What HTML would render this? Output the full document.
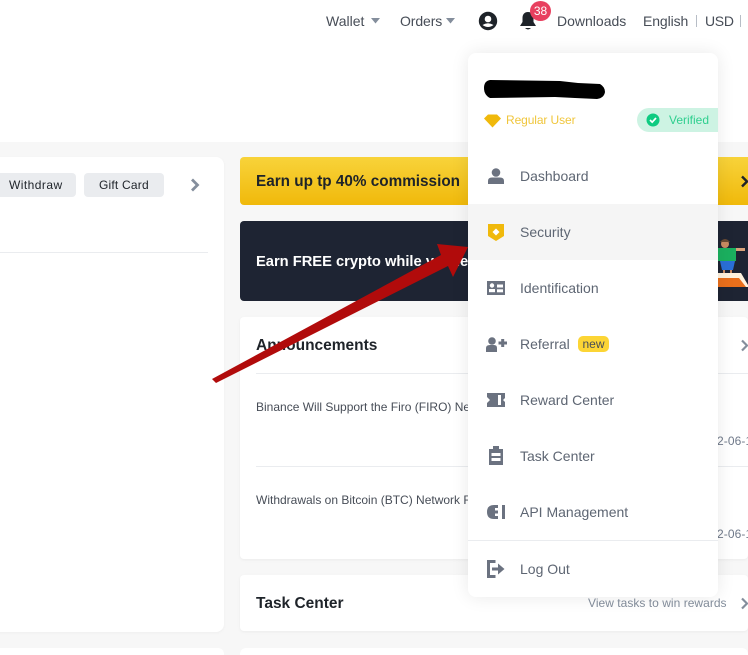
<!DOCTYPE html>
<html><head><meta charset="utf-8">
<style>
html,body{margin:0;padding:0;width:748px;height:655px;overflow:hidden;}
#w{width:748px;height:655px;overflow:hidden;position:relative;background:#f7f7f7;font-family:"Liberation Sans",sans-serif;}
.b{position:absolute;background:#fff;}
.t{position:absolute;white-space:nowrap;line-height:18px;}
svg{position:absolute;overflow:visible;}
.nav{font-size:14px;color:#474d57;top:12px;}
.m{font-size:14px;color:#5e6673;left:520px;}
.h{font-weight:bold;font-size:15.500px;}
</style></head><body><div id="w">
<div class="b" style="left:0;top:0;width:748px;height:142px;"></div>
<div class="b" style="left:-8px;top:157px;width:232px;height:475px;border-radius:8px;box-shadow:0 1px 3px rgba(0,0,0,.04)"></div>
<div class="b" style="left:0;top:252px;width:208px;height:1px;background:#eaecef"></div>
<div class="b" style="left:-10px;top:173px;width:86px;height:24px;background:#eaecef;border-radius:4px"></div>
<div class="b" style="left:84px;top:173px;width:80px;height:24px;background:#eaecef;border-radius:4px"></div>
<div class="t" style="left:9px;top:176px;font-size:12px;color:#1e2329;letter-spacing:.45px">Withdraw</div>
<div class="t" style="left:99px;top:176px;font-size:12px;color:#1e2329;letter-spacing:.2px">Gift Card</div>
<svg style="left:190px;top:178px" width="12" height="14"><path d="M2 1.500L7.500 7L2 12.500" fill="none" stroke="#848e9c" stroke-width="2.800"/></svg>

<div class="b" style="left:240px;top:157px;width:508px;height:48px;border-radius:4px 0 0 4px;background:linear-gradient(#f8d33a,#f0b90b)"></div>
<div class="t h" style="left:256px;top:173px;color:#1e2329;font-size:15.300px">Earn up tp 40% commission</div>
<svg style="left:741px;top:175px" width="8" height="13"><path d="M1 1.500L6 6.500L1 11.500" fill="none" stroke="#1e2329" stroke-width="2.400"/></svg>

<div class="b" style="left:240px;top:221px;width:508px;height:80px;border-radius:4px 0 0 4px;background:#1e2433"></div>
<div class="t h" style="left:256px;top:253px;color:#fff;font-size:14.700px">Earn FREE crypto while you learn</div>
<svg style="left:0;top:0" width="748" height="655" viewBox="0 0 748 655">
<circle cx="725" cy="244" r="4" fill="#c98b62"/><path d="M720 242Q725 236 730 242Z" fill="#6a4a33"/>
<rect x="718" y="248" width="18" height="13" fill="#1bb05f"/><rect x="736" y="248" width="9" height="3" fill="#d9a27a"/>
<path d="M720 261H735L733 270H722Z" fill="#2a6fd8"/><rect x="723" y="270" width="2" height="3" fill="#c98b62"/><rect x="730" y="270" width="2" height="3" fill="#c98b62"/>
<path d="M718 273H741L748 285V287H718Z" fill="#fff2dd"/><path d="M718 278H739L746 287H718Z" fill="#e96f1c"/>
</svg>

<div class="b" style="left:240px;top:317px;width:508px;height:242px;border-radius:4px;box-shadow:0 1px 3px rgba(0,0,0,.05)"></div>
<div class="t h" style="left:256px;top:337px;color:#1e2329">Announcements</div>
<div class="b" style="left:256px;top:373px;width:492px;height:1px;background:#eaecef"></div>
<div class="t" style="left:256px;top:398px;font-size:12px;color:#474d57">Binance Will Support the Firo (FIRO) Network</div>
<div class="t" style="left:717px;top:432px;font-size:12px;color:#707a8a;letter-spacing:.1px">2-06-1</div>
<div class="b" style="left:256px;top:466px;width:492px;height:1px;background:#eaecef"></div>
<div class="t" style="left:256px;top:491px;font-size:12px;color:#474d57">Withdrawals on Bitcoin (BTC) Network Resumed</div>
<div class="t" style="left:717px;top:525px;font-size:12px;color:#707a8a;letter-spacing:.1px">2-06-1</div>
<svg style="left:741px;top:339px" width="8" height="13"><path d="M1 1.500L6 6.500L1 11.500" fill="none" stroke="#848e9c" stroke-width="2.200"/></svg>

<div class="b" style="left:240px;top:575px;width:508px;height:56px;border-radius:4px;box-shadow:0 1px 3px rgba(0,0,0,.05)"></div>
<div class="t h" style="left:256px;top:595px;color:#1e2329">Task Center</div>
<div class="t" style="left:588px;top:594px;font-size:12px;color:#848e9c;letter-spacing:.03px">View tasks to win rewards</div>
<svg style="left:741px;top:597px" width="8" height="13"><path d="M1 1.500L6 6.500L1 11.500" fill="none" stroke="#848e9c" stroke-width="2.200"/></svg>
<div class="b" style="left:-8px;top:648px;width:232px;height:7px;border-radius:6px 6px 0 0"></div>
<div class="b" style="left:240px;top:648px;width:508px;height:7px;border-radius:6px 6px 0 0"></div>

<div class="t nav" style="left:326px">Wallet</div>
<svg style="left:371px;top:18px" width="9" height="6"><path d="M0 0H9L4.500 5.500Z" fill="#848e9c"/></svg>
<div class="t nav" style="left:400px;letter-spacing:-.1px">Orders</div>
<svg style="left:446px;top:18px" width="9" height="6"><path d="M0 0H9L4.500 5.500Z" fill="#848e9c"/></svg>
<svg style="left:478px;top:11px" width="20" height="20" viewBox="0 0 20 20"><circle cx="10" cy="10" r="9.200" fill="#1e2329"/><circle cx="10" cy="8" r="3.300" fill="#fff"/><path d="M4.500 14Q10 10.500 15.500 14Q10 18 4.500 14Z" fill="#fff"/></svg>
<svg style="left:519px;top:11px" width="18" height="20" viewBox="0 0 18 20"><path d="M9 1C5 1 3.500 4 3.500 7V11L1 15H17L14.500 11V7C14.500 4 13 1 9 1Z" fill="#1e2329"/><path d="M6 17H12Q9 20 6 17Z" fill="#1e2329"/></svg>
<div style="position:absolute;left:530px;top:1px;width:21px;height:20px;border-radius:50%;background:#e8405f;color:#fff;font-size:12px;text-align:center;line-height:20px;">38</div>
<div class="t nav" style="left:557px;">Downloads</div>
<div class="t nav" style="left:643px;letter-spacing:-.1px">English</div>
<div class="b" style="left:696px;top:15px;width:1px;height:12px;background:#b7bdc6"></div>
<div class="t nav" style="left:705px;letter-spacing:-.3px">USD</div>
<div class="b" style="left:740px;top:15px;width:1px;height:12px;background:#b7bdc6"></div>

<svg style="left:0;top:0;z-index:3" width="748" height="655" viewBox="0 0 748 655"><path d="M212 379L441 255L437 244L468 247L453 277L448 266L216 383Z" fill="#b10b0b"/></svg>

<div class="b" style="left:468px;top:53px;width:250px;height:544px;border-radius:8px;box-shadow:0 0 18px rgba(0,0,0,.09);z-index:2"></div>
<div style="position:absolute;left:0;top:0;width:748px;height:655px;z-index:4">
<svg style="left:0;top:0" width="748" height="655" viewBox="0 0 748 655"><path d="M490 80L560 81L578 83L600 84Q605 87 605 92Q604 98 597 99L575 98L555 97L490 98Q484 95 484 88Q484 81 490 80Z" fill="#000"/></svg>
<svg style="left:484px;top:114px" width="17" height="14"><path d="M4 0.500H13L17 4.500L8.500 13.500L0 4.500Z" fill="#f0b90b"/></svg>
<div class="t" style="left:506px;top:111px;font-size:12px;letter-spacing:-.1px;color:#f0c63c">Regular User</div>
<div style="position:absolute;left:637px;top:108px;width:81px;height:24px;background:#cdf3e3;border-radius:12px 0 0 12px"></div>
<svg style="left:646px;top:113px" width="14" height="14"><circle cx="7" cy="7" r="6.500" fill="#0ecb81"/><path d="M4 7L6.200 9.200L10 5" fill="none" stroke="#fff" stroke-width="1.700"/></svg>
<div class="t" style="left:669px;top:111px;font-size:12px;color:#2ecf8f">Verified</div>

<div style="position:absolute;left:468px;top:204px;width:250px;height:56px;background:#f5f5f5"></div>

<svg style="left:488px;top:168px" width="16" height="16"><circle cx="8" cy="4.500" r="4.300" fill="#6b7280"/><path d="M0 16V13Q0 9.500 4 9.500H12Q16 9.500 16 13V16Z" fill="#6b7280"/></svg>
<div class="t m" style="top:167px">Dashboard</div>

<svg style="left:488px;top:224px" width="16" height="17"><path d="M0 0H16V12L8 17L0 12Z" fill="#f0b90b"/><path d="M8 4.500L11.500 8L8 11.500L4.500 8Z" fill="#fff"/></svg>
<div class="t m" style="top:223px">Security</div>

<svg style="left:487px;top:281px" width="18" height="14"><rect width="18" height="14" fill="#6b7280"/><circle cx="5" cy="4.500" r="2.200" fill="#fff"/><rect x="2" y="8" width="6" height="3.200" fill="#fff"/><rect x="10" y="3.500" width="6" height="3" fill="#fff"/><rect x="10" y="8.300" width="6" height="3" fill="#fff"/></svg>
<div class="t m" style="top:279px">Identification</div>

<svg style="left:486px;top:337px" width="21" height="15"><circle cx="6" cy="4" r="3.800" fill="#6b7280"/><path d="M0 15V11Q0 8 4 8H8Q11 8 11 11V15Z" fill="#6b7280"/><path d="M12.500 6H21M16.700 2V10" stroke="#6b7280" stroke-width="3"/></svg>
<div class="t m" style="top:335px">Referral</div>
<div style="position:absolute;left:578px;top:336px;width:31px;height:16px;border-radius:5px;background:#fcd535;color:#474d57;font-size:12px;line-height:16px;text-align:center">new</div>

<svg style="left:487px;top:393px" width="18" height="14"><path d="M0 0H18V5L16 7L18 9V14H0V10L3 7L0 4Z" fill="#6b7280"/><rect x="11" y="2" width="3" height="10" fill="#fff"/></svg>
<div class="t m" style="top:391px">Reward Center</div>

<svg style="left:489px;top:446px" width="14" height="19"><path d="M0 3H4V0H10V3H14V19H0Z" fill="#6b7280"/><rect x="2.500" y="7" width="9" height="3" fill="#fff"/><rect x="2.500" y="12" width="9" height="3" fill="#fff"/></svg>
<div class="t m" style="top:447px">Task Center</div>

<svg style="left:487px;top:505px" width="18" height="14"><path d="M7 0H11V14H7Q0 14 0 7Q0 0 7 0Z" fill="#6b7280"/><rect x="8" y="3" width="5" height="2.500" fill="#fff"/><rect x="8" y="8.500" width="5" height="2.500" fill="#fff"/><rect x="15" y="0" width="3" height="14" fill="#6b7280"/></svg>
<div class="t m" style="top:503px">API Management</div>

<div style="position:absolute;left:468px;top:540px;width:250px;height:1px;background:#eaecef"></div>
<svg style="left:487px;top:560px" width="18" height="18"><path d="M8.500 1.500H1.500V16.500H8.500" fill="none" stroke="#6b7280" stroke-width="3"/><path d="M5 9H12" stroke="#6b7280" stroke-width="3"/><path d="M11 3.500L17.500 9L11 14.500Z" fill="#6b7280"/></svg>
<div class="t m" style="top:560px">Log Out</div>
</div>
</div></body></html>
